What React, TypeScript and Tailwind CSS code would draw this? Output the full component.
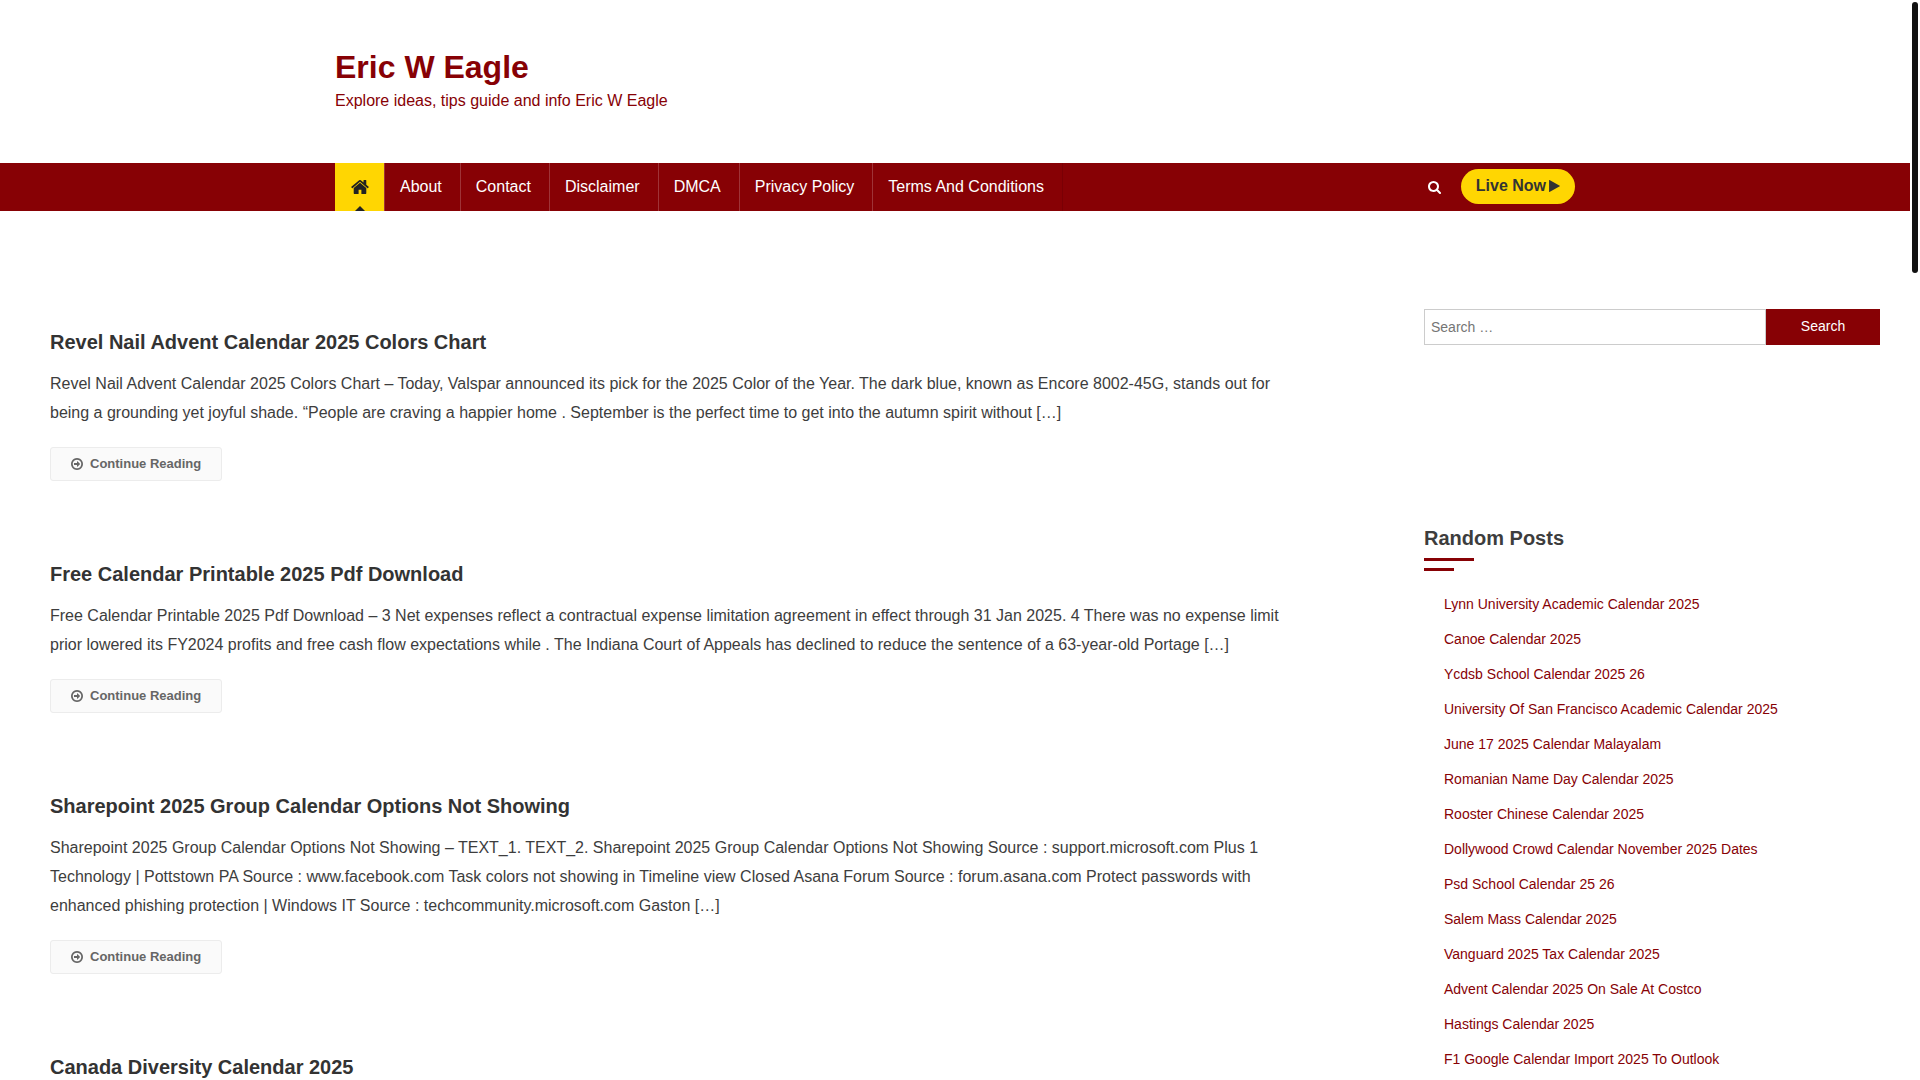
const menu = ["About", "Contact", "Disclaimer", "DMCA", "Privacy Policy", "Terms And Conditions"];

const posts = [
  {
    title: "Revel Nail Advent Calendar 2025 Colors Chart",
    excerpt:
      "Revel Nail Advent Calendar 2025 Colors Chart – Today, Valspar announced its pick for the 2025 Color of the Year. The dark blue, known as Encore 8002-45G, stands out for being a grounding yet joyful shade. “People are craving a happier home . September is the perfect time to get into the autumn spirit without […]",
  },
  {
    title: "Free Calendar Printable 2025 Pdf Download",
    excerpt:
      "Free Calendar Printable 2025 Pdf Download – 3 Net expenses reflect a contractual expense limitation agreement in effect through 31 Jan 2025. 4 There was no expense limit prior lowered its FY2024 profits and free cash flow expectations while . The Indiana Court of Appeals has declined to reduce the sentence of a 63-year-old Portage […]",
  },
  {
    title: "Sharepoint 2025 Group Calendar Options Not Showing",
    excerpt:
      "Sharepoint 2025 Group Calendar Options Not Showing – TEXT_1. TEXT_2. Sharepoint 2025 Group Calendar Options Not Showing Source : support.microsoft.com Plus 1 Technology | Pottstown PA Source : www.facebook.com Task colors not showing in Timeline view Closed Asana Forum Source : forum.asana.com Protect passwords with enhanced phishing protection | Windows IT Source : techcommunity.microsoft.com Gaston […]",
  },
  { title: "Canada Diversity Calendar 2025", excerpt: "" },
];

const randomPosts = [
  "Lynn University Academic Calendar 2025",
  "Canoe Calendar 2025",
  "Ycdsb School Calendar 2025 26",
  "University Of San Francisco Academic Calendar 2025",
  "June 17 2025 Calendar Malayalam",
  "Romanian Name Day Calendar 2025",
  "Rooster Chinese Calendar 2025",
  "Dollywood Crowd Calendar November 2025 Dates",
  "Psd School Calendar 25 26",
  "Salem Mass Calendar 2025",
  "Vanguard 2025 Tax Calendar 2025",
  "Advent Calendar 2025 On Sale At Costco",
  "Hastings Calendar 2025",
  "F1 Google Calendar Import 2025 To Outlook",
];

function HomeIcon() {
  return (
    <svg viewBox="89 253 1614 1283" className="h-[14px] w-[18px]" fill="currentColor" aria-hidden="true">
      <path d="M1472 992v480q0 26-19 45t-45 19h-384v-384h-256v384h-384q-26 0-45-19t-19-45v-480q0-1 .5-3t.5-3l575-474 575 474q1 2 1 6zm223-69l-62 74q-8 9-21 11h-3q-13 0-21-7l-692-577-692 577q-12 8-24 7-13-2-21-11l-62-74q-8-10-7-23.5t11-21.5l719-599q32-26 76-26t76 26l244 204v-195q0-14 9-23t23-9h192q14 0 23 9t9 23v408l219 182q10 8 11 21.5t-7 23.5z" />
    </svg>
  );
}

function SearchIcon() {
  return (
    <svg viewBox="64 128 1664 1664" className="size-[13px]" fill="currentColor" aria-hidden="true">
      <path d="M1216 832q0-185-131.5-316.5t-316.5-131.5-316.5 131.5-131.5 316.5 131.5 316.5 316.5 131.5 316.5-131.5 131.5-316.5zm512 832q0 52-38 90t-90 38q-54 0-90-38l-343-342q-179 124-399 124-143 0-273.5-55.5t-225-150-150-225-55.5-273.5 55.5-273.5 150-225 225-150 273.5-55.5 273.5 55.5 225 150 150 225 55.5 273.5q0 220-124 399l343 343q37 37 37 90z" />
    </svg>
  );
}

function PlayIcon() {
  return (
    <svg viewBox="192 120 1407 1554" className="h-3 w-[11px]" fill="currentColor" aria-hidden="true">
      <path d="M1576 927l-1328 738q-23 13-39.5 3t-16.5-36v-1472q0-26 16.5-36t39.5 3l1328 738q23 13 23 31t-23 31z" />
    </svg>
  );
}

function ArrowCircleIcon() {
  return (
    <svg viewBox="0 128 1536 1536" className="size-3" fill="currentColor" aria-hidden="true">
      <path d="M1152 896q0 14-9 23l-320 320q-9 9-23 9-13 0-22.5-9.5t-9.5-22.5v-192h-352q-13 0-22.5-9.5t-9.5-22.5v-192q0-13 9.5-22.5t22.5-9.5h352v-192q0-14 9-23t23-9q12 0 24 10l319 319q9 9 9 23zm160 0q0-148-73-273t-198-198-273-73-273 73-198 198-73 273 73 273 198 198 273 73 273-73 198-198 73-273zm224 0q0 209-103 385.5t-279.5 279.5-385.5 103-385.5-103-279.5-279.5-103-385.5 103-385.5 279.5-279.5 385.5-103 385.5 103 279.5 279.5 103 385.5z" />
    </svg>
  );
}

function Header() {
  return (
    <header>
      <div className="mx-auto max-w-[1240px] pt-[45px] pb-[50px] text-[#870105]">
        <p className="text-[32px] leading-[44px] font-bold">
          <a href="#">Eric W Eagle</a>
        </p>
        <p className="text-base">Explore ideas, tips guide and info Eric W Eagle</p>
      </div>

      <nav aria-label="Primary" className="bg-[#870105]">
        <div className="mx-auto flex h-12 max-w-[1240px] items-stretch text-white">
          <a
            href="#"
            aria-label="Home"
            className="relative flex w-[49px] items-center justify-center overflow-hidden bg-[#ffd602] text-[#222]"
          >
            <HomeIcon />
            {/* Active notch */}
            <span className="absolute bottom-0 left-1/2 -translate-x-1/2 border-x-[5px] border-b-[5px] border-x-transparent border-b-[#222]" />
          </a>
          <ul className="flex border-l border-white/20">
            {menu.map((label) => (
              <li key={label} className="flex border-r border-white/20 last:border-black/10">
                <a href="#" className="flex items-center pr-[18px] pl-[15px]">
                  {label}
                </a>
              </li>
            ))}
          </ul>
          <div className="ml-auto flex items-center gap-5">
            <button type="button" aria-label="Open search">
              <SearchIcon />
            </button>
            <a
              href="#"
              className="mb-px flex h-[35px] items-center gap-[3px] rounded-full bg-[#ffd602] px-[15px] pb-0.5 font-bold text-[#333]"
            >
              Live Now
              <PlayIcon />
            </a>
          </div>
        </div>
      </nav>
    </header>
  );
}

function Sidebar() {
  return (
    <aside className="w-[456px] shrink-0">
      <form role="search" className="flex h-9">
        <input
          type="search"
          aria-label="Search for"
          placeholder="Search …"
          className="min-w-0 flex-1 border border-[#ccc] px-1.5 text-sm text-[#666] placeholder:text-[#757575]"
        />
        <button type="submit" className="w-[114px] bg-[#870105] pb-0.5 text-sm text-white">
          Search
        </button>
      </form>

      <section className="mt-[180px]">
        <h2 className="text-xl leading-[26px] font-bold text-[#3d3d3d]">Random Posts</h2>
        <div className="mt-[7px] h-[3px] w-[50px] bg-[#870105]" />
        <div className="mt-[7px] h-[3px] w-[30px] bg-[#870105]" />
        <ul className="mt-[21px] flex flex-col gap-2.5 pl-5">
          {randomPosts.map((title) => (
            <li key={title} className="text-sm leading-[25px] text-[#870105]">
              <a href="#">{title}</a>
            </li>
          ))}
        </ul>
      </section>
    </aside>
  );
}

export default function App() {
  return (
    <div className="relative h-screen overflow-hidden bg-white pr-2.5 font-['Liberation_Sans',Arial,sans-serif] text-base text-[#3d3d3d]">
      <Header />

      <div className="flex items-start justify-between gap-[119px] pt-[98px] pr-[30px] pl-[50px]">
        <main className="flex min-w-0 flex-1 flex-col gap-20 pt-5">
          {posts.map((post) => (
            <article key={post.title}>
              <h2 className="text-xl leading-[26px] font-bold text-[#333]">
                <a href="#">{post.title}</a>
              </h2>
              <p className="mt-3.5 leading-[29px]">{post.excerpt}</p>
              <a
                href="#"
                className="mt-5 inline-flex h-[34px] items-center gap-[7px] rounded-[3px] border border-[#ececec] bg-[#fafafa] px-5 text-[13px] font-bold text-[#666]"
              >
                <ArrowCircleIcon />
                Continue Reading
              </a>
            </article>
          ))}
        </main>
        <Sidebar />
      </div>

      {/* Scrollbar thumb */}
      <div className="absolute top-0.5 right-0.5 h-[271px] w-1.5 rounded-full bg-[#111]" />
    </div>
  );
}
